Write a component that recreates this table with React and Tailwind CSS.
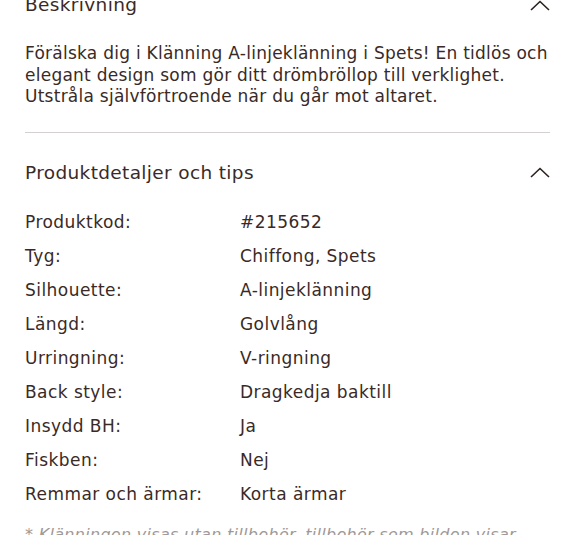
import React from 'react';

const details = [
  ['Produktkod:', '#215652'],
  ['Tyg:', 'Chiffong, Spets'],
  ['Silhouette:', 'A-linjeklänning'],
  ['Längd:', 'Golvlång'],
  ['Urringning:', 'V-ringning'],
  ['Back style:', 'Dragkedja baktill'],
  ['Insydd BH:', 'Ja'],
  ['Fiskben:', 'Nej'],
  ['Remmar och ärmar:', 'Korta ärmar'],
];

function ChevronUp() {
  return (
    <svg width="20" height="11" viewBox="0 0 20 11" fill="none" className="shrink-0">
      <path d="M1 10L10 1.5L19 10" stroke="#2b201e" strokeWidth="1.6" />
    </svg>
  );
}

export default function App() {
  return (
    <div className="w-[575px] h-[535px] overflow-hidden bg-white text-[#3a2a27]" style={{ fontFamily: '"DejaVu Sans", sans-serif' }}>
      <div className="px-[25px] -mt-[17px]">
        <div className="flex items-center justify-between h-[44px]">
          <h2 className="text-[18.5px] tracking-[0.35px]">Beskrivning</h2>
          <ChevronUp />
        </div>
        <p className="mt-[16px] text-[17px] leading-[21.5px] tracking-[0.25px] whitespace-nowrap">
          Förälska dig i Klänning A-linjeklänning i Spets! En tidlös och
          <br />
          elegant design som gör ditt drömbröllop till verklighet.
          <br />
          Utstråla självförtroende när du går mot altaret.
        </p>
        <div className="mt-[24px] border-t border-[#d4d0cf]" />
        <div className="flex items-center justify-between h-[44px] mt-[18px]">
          <h2 className="text-[18.5px] tracking-[0.35px]">Produktdetaljer och tips</h2>
          <ChevronUp />
        </div>
        <div className="mt-[11px] flex flex-col">
          {details.map(([k, v]) => (
            <div key={k} className="flex h-[34px] items-center text-[17px] tracking-[0.45px]">
              <span className="w-[215px] shrink-0">{k}</span>
              <span>{v}</span>
            </div>
          ))}
        </div>
        <p className="mt-[13px] text-[16px] leading-[20px] italic text-[#a09896] tracking-[0.3px]">
          * Klänningen visas utan tillbehör, tillbehör som bilden visar ingår inte till klänningen.
        </p>
      </div>
    </div>
  );
}
